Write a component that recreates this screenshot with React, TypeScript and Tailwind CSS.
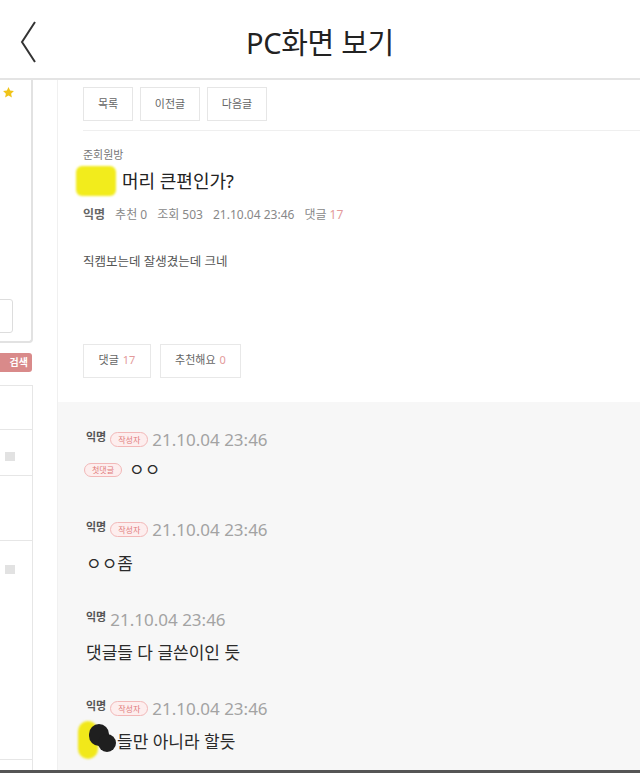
import React from "react";

const F = { fontFamily: '"Noto Sans", "Noto Sans CJK KR", sans-serif' };

function Badge({ text }: { text: string }) {
  return (
    <span className="inline-flex h-[15px] w-[38px] items-center justify-center rounded-full border border-[#f2b8b8] bg-[#fdeeee] text-[8px] leading-none text-[#e07a7a]">
      {text}
    </span>
  );
}

function CommentHead({ badge }: { badge?: boolean }) {
  return (
    <div className="flex items-center gap-[4px]">
      <span className="text-[11px] font-bold leading-none text-[#555] -mt-[6px]">익명</span>
      {badge && <Badge text="작성자" />}
      <span className="text-[17px] leading-none text-[#a3a3a3]">21.10.04 23:46</span>
    </div>
  );
}

export default function App() {
  return (
    <div className="relative h-[773px] w-[640px] overflow-hidden bg-white" style={F}>
      {/* header */}
      <div className="relative flex h-[80px] items-center justify-center border-b-2 border-[#e4e4e4] pt-[8px]">
        <svg className="absolute left-[18px] top-[20px]" width="22" height="44" viewBox="0 0 22 44">
          <path d="M17 2 L4 22 L17 42" fill="none" stroke="#333" strokeWidth="2" />
        </svg>
        <span className="text-[29px] text-[#222] tracking-[-0.3px]">PC화면 보기</span>
      </div>

      <div className="flex h-[691px]">
        {/* left sidebar */}
        <div className="flex w-[33px] flex-col">
          <div className="relative h-[263px] rounded-br-[4px] border-b-2 border-r-2 border-[#e2e2e2]">
            <svg className="absolute left-[2px] top-[6px]" width="13" height="13" viewBox="0 0 24 24">
              <path d="M12 2l3 6.5 7 .8-5.2 4.8 1.5 7L12 17.5 5.7 21.1l1.5-7L2 9.3l7-.8z" fill="#f0c419" />
            </svg>
            <div className="absolute left-[-6px] top-[219px] h-[34px] w-[19px] rounded-[3px] border border-[#ddd]" />
          </div>
          <div className="mt-[10px] flex h-[19px] w-[32px] items-center justify-end rounded-r-[3px] bg-[#d98a8a] pr-[4px] text-[10px] font-bold text-white">
            검색
          </div>
          <div className="mt-[13px] flex flex-1 flex-col border-r border-t border-[#e6e6e6]">
            <div className="h-[44px] border-b border-[#e6e6e6]" />
            <div className="relative h-[46px] border-b border-[#e6e6e6]">
              <div className="absolute left-[5px] top-[22px] h-[9px] w-[10px] bg-[#e2e2e2]" />
            </div>
            <div className="h-[65px] border-b border-[#e6e6e6]" />
            <div className="relative h-[219px] border-b border-[#e6e6e6]">
              <div className="absolute left-[5px] top-[24px] h-[9px] w-[10px] bg-[#e2e2e2]" />
            </div>
          </div>
        </div>

        {/* main */}
        <div className="ml-[24px] flex flex-1 flex-col border-l border-[#f0f0f0]">
          <div className="h-[322px] pl-[25px]">
            <div className="flex gap-[7px] pt-[7px]">
              {["목록", "이전글", "다음글"].map((t, i) => (
                <div
                  key={t}
                  className={`flex h-[34px] items-center justify-center border border-[#e6e6e6] text-[11px] text-[#666] ${i === 0 ? "w-[50px]" : "w-[60px]"}`}
                >
                  {t}
                </div>
              ))}
            </div>
            <div className="mt-[9px] border-t border-[#efefef]" />
            <div className="mt-[18px] text-[11px] leading-none text-[#777]">준회원방</div>
            <div className="mt-[6px] flex items-center">
              <div className="ml-[-7px] h-[30px] w-[40px] rounded-[6px] bg-[#f2ec1c] blur-[1px]" />
              <span className="ml-[6px] text-[18px] leading-none text-[#222]">머리 큰편인가?</span>
            </div>
            <div className="mt-[13px] flex items-center gap-[10px] text-[12px] leading-none text-[#888]">
              <span className="font-bold text-[#666]">익명</span>
              <span>추천 0</span>
              <span>조회 503</span>
              <span>21.10.04 23:46</span>
              <span>
                댓글 <span className="text-[#e39a9a]">17</span>
              </span>
            </div>
            <div className="mt-[35px] text-[12.5px] leading-none text-[#555]">직캠보는데 잘생겼는데 크네</div>
            <div className="mt-[75px] flex gap-[9px]">
              <div className="flex h-[34px] w-[68px] items-center justify-center gap-[4px] border border-[#e8e8e8] text-[11px] text-[#666]">
                댓글 <span className="text-[#e39a9a]">17</span>
              </div>
              <div className="flex h-[34px] w-[81px] items-center justify-center gap-[4px] border border-[#e8e8e8] text-[11px] text-[#666]">
                추천해요 <span className="text-[#e39a9a]">0</span>
              </div>
            </div>
          </div>

          <div className="flex flex-1 flex-col bg-[#f7f7f7] pl-[28px] pt-[29px] text-[#2a2a2a]">
            <CommentHead badge />
            <div className="mt-[13px] flex items-center gap-[7px]">
              <span className="inline-flex h-[14px] w-[38px] items-center justify-center rounded-full border border-[#f2b8b8] bg-[#fdeeee] text-[8px] leading-none text-[#e07a7a] ml-[-2px]">
                첫댓글
              </span>
              <span className="text-[17px] leading-none">ㅇㅇ</span>
            </div>

            <div className="mt-[43px]">
              <CommentHead badge />
            </div>
            <div className="mt-[17px] text-[17px] leading-none">ㅇㅇ좀</div>

            <div className="mt-[39px]">
              <CommentHead />
            </div>
            <div className="mt-[16px] text-[17px] leading-none">댓글들 다 글쓴이인 듯</div>

            <div className="mt-[39px]">
              <CommentHead badge />
            </div>
            <div className="relative mt-[16px] text-[17px] leading-none">
              <span className="ml-[31px]">들만 아니라 할듯</span>
              <div className="absolute left-[-8px] top-[-12px] h-[38px] w-[20px] rounded-full bg-[#f1e81a] blur-[1px]" />
              <div className="absolute left-[3px] top-[-9px] h-[22px] w-[20px] rounded-full bg-[#1f1f1f]" />
              <div className="absolute left-[12px] top-[1px] h-[18px] w-[18px] rounded-full bg-[#1f1f1f]" />
            </div>
          </div>
        </div>
      </div>
      <div className="absolute bottom-0 left-0 h-[3px] w-full bg-[#555]" />
    </div>
  );
}
